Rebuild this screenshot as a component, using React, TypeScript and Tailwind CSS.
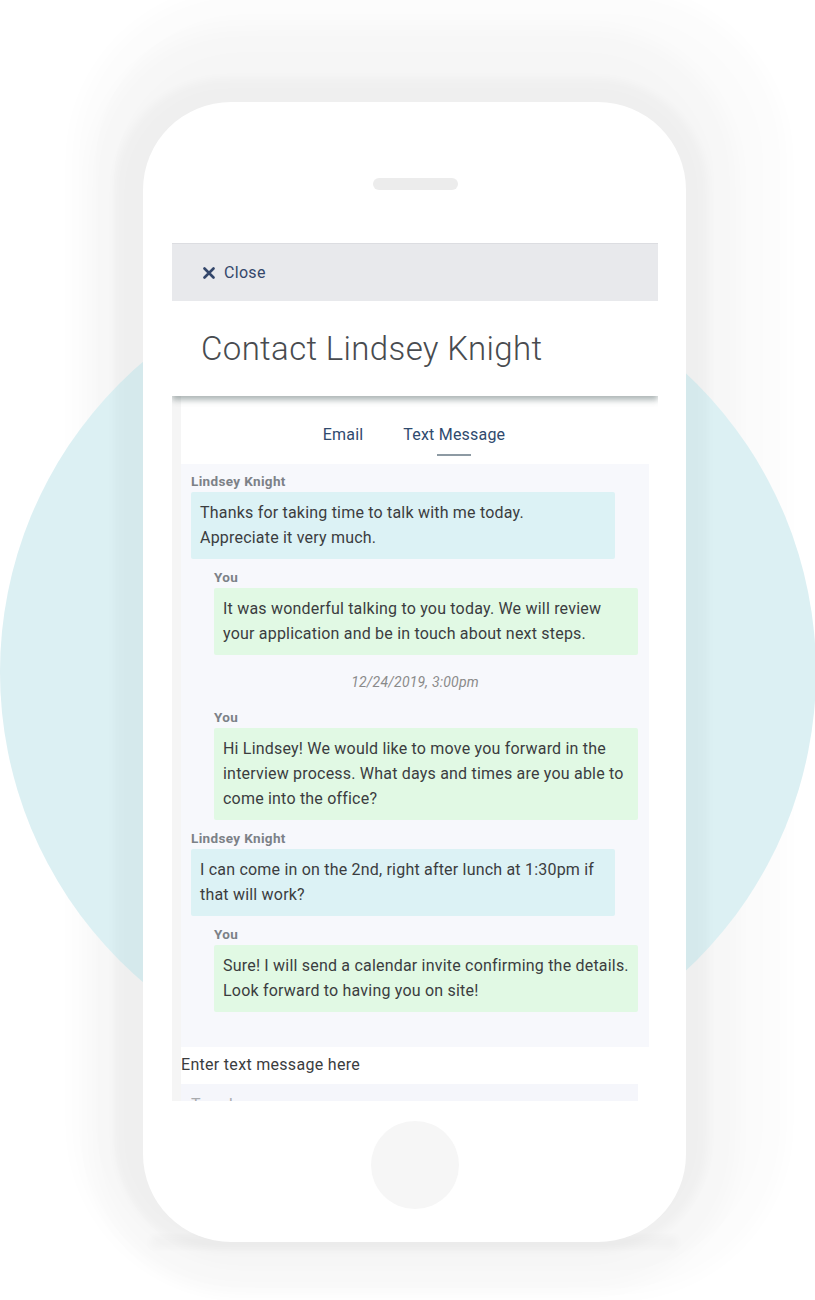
import React from "react";

type Msg = { who: string; me: boolean; lines: string[] };

const msgs: (Msg | { stamp: string })[] = [
  { who: "Lindsey Knight", me: false, lines: ["Thanks for taking time to talk with me today.", "Appreciate it very much."] },
  { who: "You", me: true, lines: ["It was wonderful talking to you today. We will review", "your application and be in touch about next steps."] },
  { stamp: "12/24/2019, 3:00pm" },
  { who: "You", me: true, lines: ["Hi Lindsey! We would like to move you forward in the", "interview process. What days and times are you able to", "come into the office?"] },
  { who: "Lindsey Knight", me: false, lines: ["I can come in on the 2nd, right after lunch at 1:30pm if", "that will work?"] },
  { who: "You", me: true, lines: ["Sure! I will send a calendar invite confirming the details.", "Look forward to having you on site!"] },
];

function Background() {
  return (
    <svg className="absolute inset-0 z-0" width="815" height="1300" viewBox="0 0 815 1300">
      <defs>
        <filter id="b1" x="-20%" y="-20%" width="140%" height="140%">
          <feGaussianBlur stdDeviation="10" />
        </filter>
        <filter id="b2" x="-20%" y="-20%" width="140%" height="140%">
          <feGaussianBlur stdDeviation="4" />
        </filter>
      </defs>
      <rect x="72" y="-10" width="715" height="1305" rx="170" fill="#000" opacity="0.012" filter="url(#b1)" />
      <rect x="90" y="28" width="648" height="1262" rx="150" fill="#000" opacity="0.014" filter="url(#b1)" />
      <circle cx="408" cy="672" r="408" fill="#dcf0f3" />
      <rect x="114" y="78" width="594" height="1174" rx="112" fill="#000" opacity="0.022" filter="url(#b2)" />
      <rect x="150" y="1236" width="528" height="12" rx="6" fill="#000" opacity="0.025" filter="url(#b2)" />
    </svg>
  );
}

export default function App() {
  return (
    <div
      className="relative w-[815px] h-[1300px] overflow-hidden bg-white"
      style={{ fontFamily: "Roboto, 'Noto Sans', sans-serif" }}
    >
      <Background />
      <div className="relative z-10 pl-[143px] pt-[102px]">
        <div className="w-[543px] h-[1140px] bg-white rounded-[88px] flex flex-col items-center pt-[76px] pl-[1px]">
          <div className="w-[85px] h-[12px] rounded-full bg-[#ececec]" />
          <div className="mt-[53px] w-[486px] h-[858px] overflow-hidden flex flex-col bg-white">
            {/* Header */}
            <div className="relative z-10 shadow-[0_4px_6px_rgba(70,90,90,0.45)]">
              <div className="h-[58px] bg-[#e8e9ec] border-t border-[#dcdde1] flex items-center pl-[31px] gap-[9px] text-[#34476b]">
                <svg width="12" height="12" viewBox="0 0 12 12">
                  <path d="M1.5 1.5 L10.5 10.5 M10.5 1.5 L1.5 10.5" stroke="#34476b" strokeWidth="2.6" strokeLinecap="round" />
                </svg>
                <span className="text-[16px] leading-5 tracking-[0.3px]">Close</span>
              </div>
              <div className="h-[95px] bg-white flex items-center pl-[29px]">
                <h1 className="text-[33px] font-light text-[#484b4f] leading-none tracking-[0.35px]">Contact Lindsey Knight</h1>
              </div>
            </div>
            {/* Body */}
            <div className="flex-1 flex border-l-[9px] border-[#f5f5f5]">
              <div className="w-[468px] flex flex-col">
                <div className="flex justify-center gap-[40px] pt-[29px] pr-[2px] text-[16px] leading-5 tracking-[0.2px] text-[#2f4a6e]">
                  <span>Email</span>
                  <div className="flex flex-col items-center">
                    <span>Text Message</span>
                    <div className="mt-[9px] w-[34px] h-[2px] bg-[#8d9aa3]" />
                  </div>
                </div>
                <div className="mt-[8px] bg-[#f7f8fc] pt-[8px] pb-[35px] flex flex-col">
                  {msgs.map((m, i) => {
                    if ("stamp" in m) {
                      return (
                        <div key={i} className="mt-[17px] mb-[7px] text-center text-[14px] leading-5 italic tracking-[0.2px] text-[#8a8a8a]">
                          {m.stamp}
                        </div>
                      );
                    }
                    return (
                      <div key={i} className={`flex flex-col ${i === 0 ? "" : "mt-[9px]"} ${m.me ? "ml-[33px]" : "ml-[10px]"}`}>
                        <div className="text-[13.5px] leading-[18px] font-bold tracking-[0.35px] text-[#7c8187]">{m.who}</div>
                        <div
                          className={`mt-[2px] w-[424px] rounded-[2px] pl-[9px] pr-1 pt-[8px] pb-[9px] text-[16px] leading-[25px] tracking-[0.2px] text-[#3b3d3f] whitespace-nowrap ${
                            m.me ? "bg-[#e1f9e4]" : "bg-[#dcf2f5]"
                          }`}
                        >
                          {m.lines.map((l, j) => (
                            <div key={j}>{l}</div>
                          ))}
                        </div>
                      </div>
                    );
                  })}
                </div>
                <div className="mt-[6px] text-[16px] leading-6 tracking-[0.3px] text-[#3a3c3e]">Enter text message here</div>
                <div className="mt-[7px] w-[457px] h-[44px] bg-[#f5f6fb] px-[10px] pt-[9px] text-[16px] leading-6 text-[#a9abae]">
                  Type here
                </div>
              </div>
            </div>
          </div>
          <div className="mt-[20px] w-[88px] h-[88px] rounded-full bg-[#f6f6f6]" />
        </div>
      </div>
    </div>
  );
}
